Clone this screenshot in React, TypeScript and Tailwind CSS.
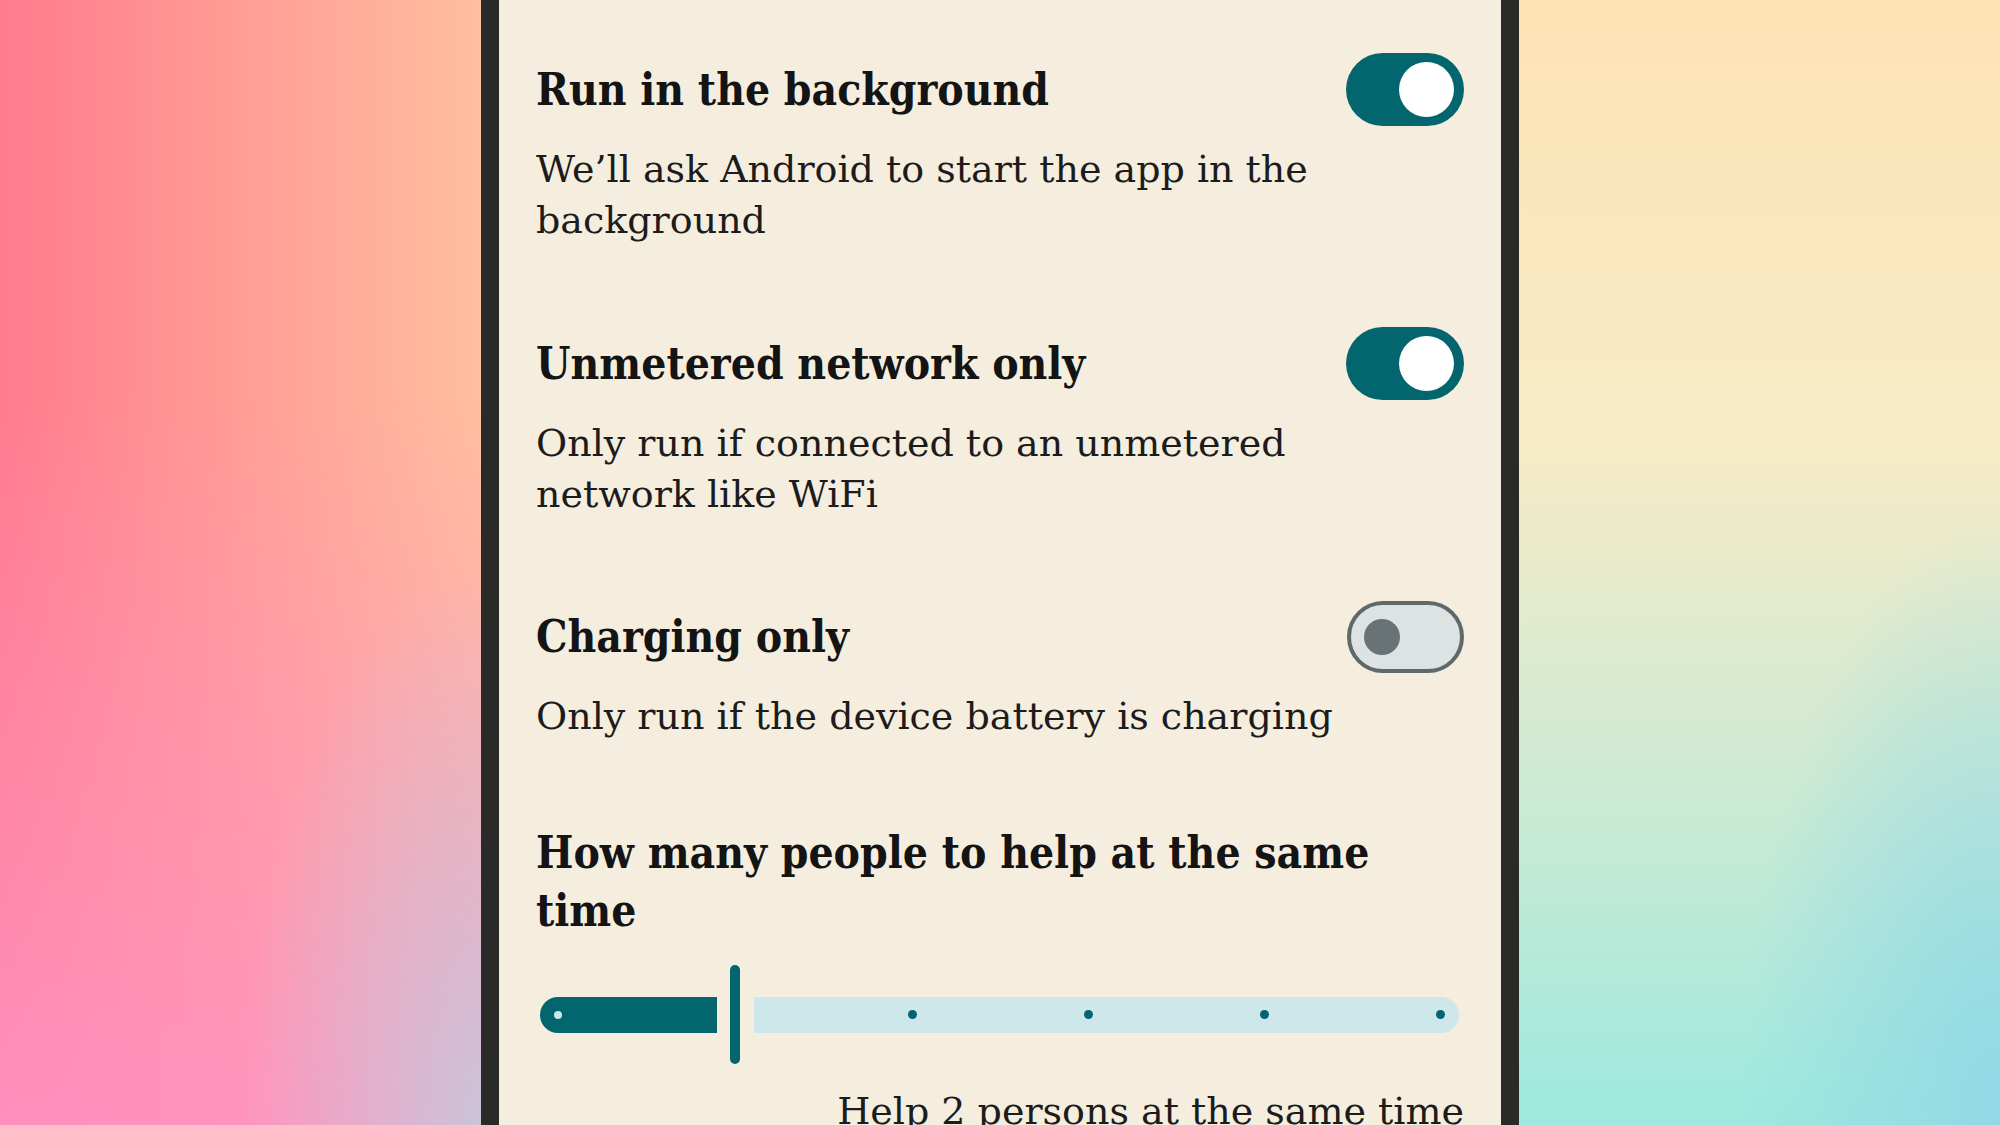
import React from "react";

const Toggle = ({ on }: { on: boolean }) => {
  if (on) {
    return (
      <div className="flex h-[73px] w-[118px] shrink-0 items-center justify-end rounded-full bg-[#03666f] pr-[10px]">
        <div className="h-[55px] w-[55px] rounded-full bg-white" />
      </div>
    );
  }
  return (
    <div className="flex h-[72px] w-[117px] shrink-0 items-center rounded-full border-[4px] border-[#5f696b] bg-[#dde3e3] pl-[13px]">
      <div className="h-[36px] w-[36px] rounded-full bg-[#697274]" />
    </div>
  );
};

const Setting = ({
  title,
  on,
  children,
}: {
  title: string;
  on: boolean;
  children: React.ReactNode;
}) => (
  <div className="flex flex-col">
    <div className="flex items-center justify-between">
      <h2 className="font-['DejaVu_Serif_Condensed','DejaVu_Serif',serif] text-[44px] font-bold leading-[58px] text-[#141414]">
        {title}
      </h2>
      <Toggle on={on} />
    </div>
    <p className="mt-[18px] font-['DejaVu_Serif',serif] text-[38px] leading-[51px] text-[#1c1c1c]">
      {children}
    </p>
  </div>
);

const Slider = () => (
  <div className="ml-[4px] mr-[5px] flex h-[99px] items-center">
    <div className="flex h-[36px] w-[177px] items-center rounded-l-full rounded-r-[5px] bg-[#03666f] pl-[14px]">
      <div className="h-[8px] w-[8px] rounded-full bg-[#cde7ea]" />
    </div>
    <div className="ml-[13px] h-[99px] w-[10px] rounded-full bg-[#03666f]" />
    <div className="ml-[14px] flex h-[36px] flex-1 items-center justify-between rounded-l-[5px] rounded-r-full bg-[#cde7ea] pl-[154px] pr-[14px]">
      <div className="h-[9px] w-[9px] rounded-full bg-[#03666f]" />
      <div className="h-[9px] w-[9px] rounded-full bg-[#03666f]" />
      <div className="h-[9px] w-[9px] rounded-full bg-[#03666f]" />
      <div className="h-[9px] w-[9px] rounded-full bg-[#03666f]" />
    </div>
  </div>
);

export default function App() {
  return (
    <div className="flex h-[1125px] w-full overflow-hidden">
      <div className="w-[481px] shrink-0 bg-[radial-gradient(ellipse_at_100%_100%,#cbc3d8_0%,rgba(203,195,216,0)_35%),linear-gradient(to_bottom,rgba(255,146,196,0)_35%,rgba(255,146,196,0.85)_100%),linear-gradient(to_right,#ff7b8d,#ffbf9e)]" />

      <div className="flex h-full w-[1038px] shrink-0 border-x-[18px] border-[#2a2a28]">
        <div className="flex flex-1 flex-col bg-[#f5eedf] pl-[37px] pr-[37px] pt-[53px]">
          <Setting title="Run in the background" on={true}>
            We’ll ask Android to start the app in the
            <br />
            background
          </Setting>

          <div className="mt-[81px]">
            <Setting title="Unmetered network only" on={true}>
              Only run if connected to an unmetered
              <br />
              network like WiFi
            </Setting>
          </div>

          <div className="mt-[81px]">
            <Setting title="Charging only" on={false}>
              Only run if the device battery is charging
            </Setting>
          </div>

          <h2 className="mt-[82px] font-['DejaVu_Serif_Condensed','DejaVu_Serif',serif] text-[44px] font-bold leading-[58px] text-[#141414]">
            How many people to help at the same
            <br />
            time
          </h2>

          <div className="mt-[25px]">
            <Slider />
          </div>

          <p className="mt-[22px] text-right font-['DejaVu_Serif',serif] text-[38px] leading-[51px] text-[#1c1c1c]">
            Help 2 persons at the same time
          </p>
        </div>
      </div>

      <div className="flex-1 bg-[radial-gradient(ellipse_at_100%_100%,#92d8e6_0%,rgba(146,216,230,0)_38%),linear-gradient(to_bottom,#fde3b4_0%,#f8ebc6_38%,#cdead3_70%,#9de9de_100%)]" />
    </div>
  );
}
